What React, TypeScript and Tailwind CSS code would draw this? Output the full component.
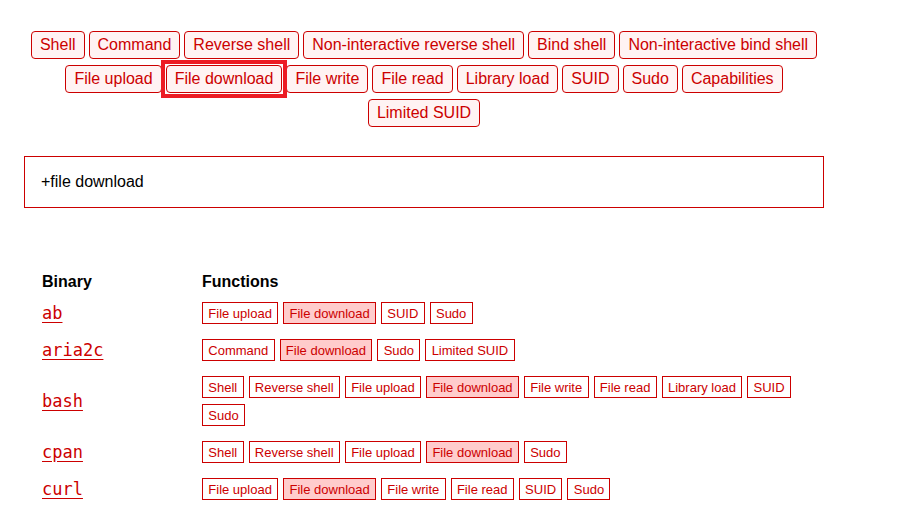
import React from 'react';

const filters = [
  'Shell',
  'Command',
  'Reverse shell',
  'Non-interactive reverse shell',
  'Bind shell',
  'Non-interactive bind shell',
  'File upload',
  'File download',
  'File write',
  'File read',
  'Library load',
  'SUID',
  'Sudo',
  'Capabilities',
  'Limited SUID',
];

const rows = [
  { name: 'ab', fns: ['File upload', 'File download', 'SUID', 'Sudo'] },
  { name: 'aria2c', fns: ['Command', 'File download', 'Sudo', 'Limited SUID'] },
  {
    name: 'bash',
    fns: ['Shell', 'Reverse shell', 'File upload', 'File download', 'File write', 'File read', 'Library load', 'SUID', 'Sudo'],
  },
  { name: 'cpan', fns: ['Shell', 'Reverse shell', 'File upload', 'File download', 'Sudo'] },
  { name: 'curl', fns: ['File upload', 'File download', 'File write', 'File read', 'SUID', 'Sudo'] },
];

const active = 'File download';

const App = () => {
  return (
    <div
      className="w-[914px] h-[510px] overflow-hidden bg-white text-black"
      style={{ fontFamily: '"Liberation Sans", Arial, sans-serif' }}
    >
      <div className="ml-[24px] w-[800px] pt-[31px]">
        {/* filter buttons */}
        <div className="flex flex-wrap justify-center gap-x-[4px] gap-y-[6px]">
          {filters.map((f) => (
            <button
              key={f}
              className="relative h-[28px] px-[8px] flex items-center rounded-[4px] border border-[#cc0000] bg-[#fff3f3] text-[#cc0000] text-[16px] leading-none"
            >
              {f}
              {f === active && (
                <span className="absolute -inset-[6px] border-4 border-[#ec1c24] pointer-events-none z-10" />
              )}
            </button>
          ))}
        </div>

        {/* search box */}
        <div className="mt-[29px] h-[52px] border border-[#cc0000] flex items-center px-[16px] text-[16px]">
          +file download
        </div>

        {/* table */}
        <div className="mt-[61px] px-[18px]">
          <div className="h-[26px] flex items-center font-bold text-[16px] leading-none">
            <div className="w-[160px]">Binary</div>
            <div>Functions</div>
          </div>
          {rows.map((r) => (
            <div key={r.name} className="flex items-center pt-[7px] pb-[8px] leading-none">
              <div className="w-[160px] shrink-0 h-[22px] flex items-center">
                <a
                  href="#"
                  className="text-[#cc0000] underline underline-offset-[3px] text-[17px] leading-none"
                  style={{ fontFamily: '"DejaVu Sans Mono", monospace' }}
                >
                  {r.name}
                </a>
              </div>
              <div className="flex-1 flex flex-wrap gap-x-[5px] gap-y-[6px]">
                {r.fns.map((fn) => (
                  <span
                    key={fn}
                    className={
                      fn === active
                        ? 'h-[22px] px-[5.3px] flex items-center border border-[#cc0000] bg-[#ffcccc] text-[#cc0000] text-[13px] leading-none'
                        : 'h-[22px] px-[5.3px] flex items-center border border-[#cc0000] bg-white text-[#cc0000] text-[13px] leading-none'
                    }
                  >
                    {fn}
                  </span>
                ))}
              </div>
            </div>
          ))}
        </div>
      </div>
    </div>
  );
};

export default App;
